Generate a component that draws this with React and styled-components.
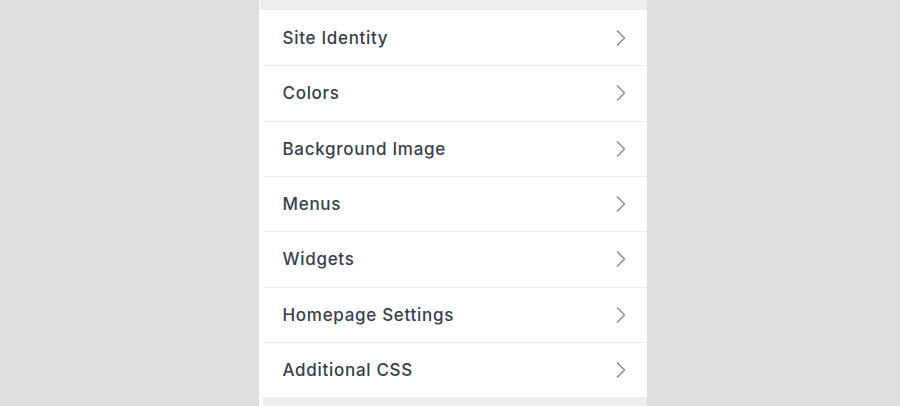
import styled, { createGlobalStyle } from 'styled-components';

const GlobalStyle = createGlobalStyle`
    html, body {
        margin: 0;
        padding: 0;
        background: #dedede;
    }
    body {
        font-family: Inter, "Liberation Sans", sans-serif;
    }
`

const Page = styled.div`
    display: flex;
    justify-content: center;
    width: 900px;
    height: 406px;
    overflow: hidden;
    padding-left: 5px;
    box-sizing: border-box;
`

const Panel = styled.div`
    width: 388px;
    display: flex;
    flex-direction: column;
    background: #fff;
`

const Strip = styled.div`
    height: ${props => props.h}px;
    margin-left: ${props => props.inset}px;
    background: #eeeeee;
    flex-shrink: 0;
`

const List = styled.ul`
    list-style: none;
    margin: 0 0 0 4px;
    padding: 0;
`

const Row = styled.li`
    display: flex;
    align-items: center;
    justify-content: space-between;
    height: 55.33px;
    box-sizing: border-box;
    padding: 0 20px 0 20px;
    border-top: ${props => props.first ? 'none' : '1.5px solid #ebebeb'};
    color: #363f4b;
    font-size: 17px;
    font-weight: 500;
    letter-spacing: 0.7px;
    cursor: pointer;
`

const Chevron = () => (
    <svg width="12" height="18" viewBox="0 0 12 18" fill="none">
        <path d="M2.5 2 L9.5 9 L2.5 16" stroke="#8f9499" strokeWidth="1.7" strokeLinecap="round" strokeLinejoin="round" />
    </svg>
)

const sections = [
    'Site Identity',
    'Colors',
    'Background Image',
    'Menus',
    'Widgets',
    'Homepage Settings',
    'Additional CSS',
]

const App = () => {
    return (
        <>
            <GlobalStyle />
            <Page>
                <Panel>
                    <Strip h={10} inset={1} />
                    <List>
                        {sections.map((s, i) => (
                            <Row key={s} first={i === 0}>
                                <span>{s}</span>
                                <Chevron />
                            </Row>
                        ))}
                    </List>
                    <Strip h={20} inset={4} />
                </Panel>
            </Page>
        </>
    );
}

export default App;
